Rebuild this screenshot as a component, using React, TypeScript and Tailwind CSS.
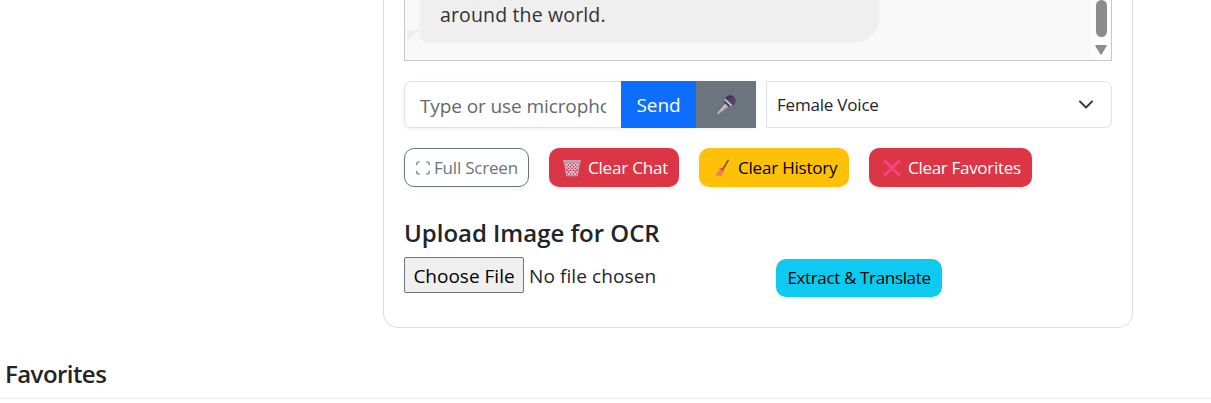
import React from "react";

const SHADOW = "shadow-[0_2px_6px_rgba(0,0,0,0.05)]";

function MicIcon() {
  return (
    <svg width="22" height="22" viewBox="0 0 22 22" aria-hidden="true">
      <path d="M2 19.5 11.2 8.8l3.4 3.4L3.2 20.3z" fill="#a99fb0" />
      <path d="M2.4 19.2 11.4 9.3l1.2 1.2L3 19.8z" fill="#d3cbd8" />
      <circle cx="15.4" cy="6.8" r="5.4" fill="#54406a" />
      <path d="M10.2 4.2a5.5 5.5 0 0 1 8.6-1.4L13 4.8z" fill="#443354" />
      <path d="M10.6 4.8 17.3 11l-1.4 1.5-6.6-6.3z" fill="#c9bdd0" />
      <path d="M9.3 6.5 15.5 12.3l-1.6.8-5.1-4.9z" fill="#4b3958" />
    </svg>
  );
}

function TrashIcon() {
  return (
    <svg width="18" height="18" viewBox="0 0 18 18" aria-hidden="true">
      <path d="M1.5 2.5h15l-2 14.5h-11z" fill="#c43d51" />
      <path
        d="M2.2 4l11 12M5.5 4l8.3 9M9 4l5.5 6M12.5 4l2.8 3M2.9 8l8 8.7M3.6 12.5l3.6 4M15.8 4l-11 12M12.5 4l-8.3 9M9 4l-5.5 6M5.5 4L2.7 7M15.1 8l-8 8.7M14.4 12.5l-3.6 4"
        stroke="#dbcbd8"
        strokeWidth="1.1"
        fill="none"
      />
      <path d="M1.6 3.5l2.1 13h10.6l2.1-13" stroke="#c4b5c4" strokeWidth="1.2" fill="none" />
      <rect x="0" y="1" width="18" height="2.7" rx="1" fill="#b5a9b8" />
      <path d="M3.2 16.5h11.6" stroke="#a99bad" strokeWidth="1.6" />
    </svg>
  );
}

function BroomIcon() {
  return (
    <svg width="18" height="18" viewBox="0 0 18 18" aria-hidden="true">
      <path d="M15.2 1.4 9.4 11" stroke="#85505c" strokeWidth="1.8" strokeLinecap="round" />
      <path d="M6.2 10.2 10.5 13l-1.3 4.2L1.5 16c2.2-1.3 3.5-3.4 4.7-5.8z" fill="#f48b51" />
      <path d="m6.1 10 1.4-1.2 3.4 2.3-.3 2z" fill="#df554b" />
      <path d="m3.4 16 3-3.4M6.2 16.5l1.7-3" stroke="#d86c46" strokeWidth=".8" />
    </svg>
  );
}

function CrossIcon() {
  return (
    <svg width="18" height="18" viewBox="0 0 18 18" aria-hidden="true">
      <path d="M1.2 1.2 16.8 16.8M16.8 1.2 1.2 16.8" stroke="#f9447f" strokeWidth="2.8" />
    </svg>
  );
}

function FullIcon() {
  return (
    <svg width="14" height="14" viewBox="0 0 14 14" fill="none" stroke="#6c757d" strokeWidth="1.2" aria-hidden="true">
      <path d="M.8 4.2V2.6Q.8 1 2.4 1H4M10 1h1.6q1.6 0 1.6 1.6v1.6M13.2 9.8v1.6q0 1.6-1.6 1.6H10M4 13H2.4Q.8 13 .8 11.4V9.8" />
    </svg>
  );
}

export default function App() {
  return (
    <div className="h-[403px] w-[1211px] overflow-hidden bg-white font-['Open_Sans','Noto_Sans',sans-serif] text-[#212529]">
      <main className="ml-[383px] h-[328px] w-[750px] rounded-b-[15px] border border-t-0 border-[#dedede] px-5">
        <section className="flex h-[61px] border border-t-0 border-[#c8c8c8] bg-[#f9f9f9]">
          <div className="flex w-[15px] shrink-0 items-start pl-[2px] pt-[30px]">
            <svg width="13" height="12" viewBox="0 0 13 12" aria-hidden="true">
              <path d="M0 0h13L0 11z" fill="#efefef" />
            </svg>
          </div>
          <div className="h-[42px] w-[459px] rounded-bl-[8px] rounded-br-[25px] bg-[#efefef] pl-5 shadow-[0_1px_3px_rgba(0,0,0,0.04)]">
            <p className="whitespace-nowrap text-[19.5px] leading-[30px] tracking-[0.15px] text-[#333]">around the world.</p>
          </div>
          <div className="ml-auto flex w-[20px] flex-col items-center bg-[#fcfcfc]">
            <div className="h-[37px] w-[11px] rounded-[6px] bg-[#8b8b8b]" />
            <svg className="mt-[8px]" width="12" height="10" viewBox="0 0 12 10" aria-hidden="true">
              <path d="M1 .8h10L6 9z" fill="#8b8b8b" stroke="#8b8b8b" strokeWidth="1.4" strokeLinejoin="round" />
            </svg>
          </div>
        </section>

        <section className="mt-5 flex h-[47px]">
          <div className={`flex w-[352px] rounded-l-[7px] ${SHADOW}`}>
            <div className="flex w-[217px] items-center rounded-l-[7px] border border-r-0 border-[#dee2e6] bg-white pl-[15px] pr-[15px] pt-[2px]">
              <div className="w-full overflow-hidden whitespace-nowrap text-[19px] leading-[30px] tracking-[-0.1px] text-[#65696d]">
                Type or use microphone
              </div>
            </div>
            <button className="w-[75px] bg-[#0d6efd] pt-[2px] text-[19px] tracking-[-0.1px] text-white">Send</button>
            <button className="flex w-[60px] items-center justify-center bg-[#6c757d]">
              <MicIcon />
            </button>
          </div>
          <div className="ml-[10px] flex flex-1 items-center justify-between rounded-r-[7px] border border-[#dee2e6] pl-[10px] pr-[18px]">
            <span className="whitespace-nowrap pt-px text-[17px] tracking-[-0.2px]">Female Voice</span>
            <svg width="14" height="14" viewBox="0 0 14 14" fill="none" aria-hidden="true">
              <path d="m1 3.5 6 6 6-6" stroke="#343a40" strokeWidth="1.9" strokeLinecap="round" strokeLinejoin="round" />
            </svg>
          </div>
        </section>

        <section className="mt-5 flex h-[39px] gap-5 whitespace-nowrap text-[17px] tracking-[-0.2px]">
          <button className={`flex w-[125px] items-center rounded-[10px] border border-[#6c757d] pl-[11px] text-[#6c757d] ${SHADOW}`}>
            <FullIcon />
            <span className="ml-[4px] pt-px">Full Screen</span>
          </button>
          <button className={`flex w-[130px] items-center rounded-[10px] bg-[#dc3545] pl-[14px] text-white ${SHADOW}`}>
            <TrashIcon />
            <span className="ml-[7px] pt-px">Clear Chat</span>
          </button>
          <button className={`flex w-[150px] items-center rounded-[10px] bg-[#ffc107] pl-[14px] text-black ${SHADOW}`}>
            <BroomIcon />
            <span className="ml-[7px] pt-px">Clear History</span>
          </button>
          <button className={`flex w-[163px] items-center rounded-[10px] bg-[#dc3545] pl-[14px] text-white ${SHADOW}`}>
            <CrossIcon />
            <span className="ml-[7px] pt-px tracking-[-0.3px]">Clear Favorites</span>
          </button>
        </section>

        <section className="mt-[31px]">
          <h2 className="whitespace-nowrap text-[24px] font-semibold leading-[30px] tracking-[-0.02px]">Upload Image for OCR</h2>
          <div className="mt-[9px] flex items-start whitespace-nowrap">
            <button className="h-[36px] w-[120px] rounded-[2px] border border-[#767676] bg-[#efefef] pt-[2px] text-[19px] text-black">
              Choose File
            </button>
            <span className="ml-[5px] w-[247px] text-[19px] leading-[39px] tracking-[0.1px]">No file chosen</span>
            <button className={`mt-[2px] h-[38px] w-[166px] rounded-[10px] bg-[#0dcaf0] text-[17px] tracking-[-0.35px] text-black ${SHADOW}`}>
              Extract &amp; Translate
            </button>
          </div>
        </section>
      </main>

      <section className="mt-[31px] h-[40px] border-b border-[#ededed] pl-[5px]">
        <h2 className="text-[24px] font-semibold leading-[30px] tracking-[-0.55px]">Favorites</h2>
      </section>
    </div>
  );
}
